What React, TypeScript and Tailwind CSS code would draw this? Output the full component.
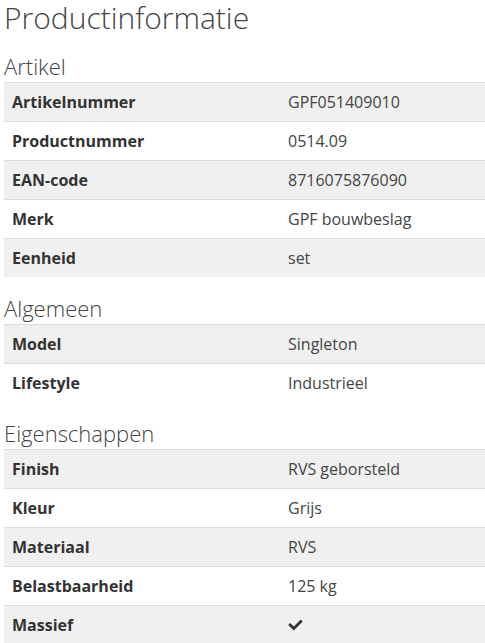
import React from "react";

type Row = { label: string; value?: string; check?: boolean };

const sections: { title: string; rows: Row[] }[] = [
  {
    title: "Artikel",
    rows: [
      { label: "Artikelnummer", value: "GPF051409010" },
      { label: "Productnummer", value: "0514.09" },
      { label: "EAN-code", value: "8716075876090" },
      { label: "Merk", value: "GPF bouwbeslag" },
      { label: "Eenheid", value: "set" },
    ],
  },
  {
    title: "Algemeen",
    rows: [
      { label: "Model", value: "Singleton" },
      { label: "Lifestyle", value: "Industrieel" },
    ],
  },
  {
    title: "Eigenschappen",
    rows: [
      { label: "Finish", value: "RVS geborsteld" },
      { label: "Kleur", value: "Grijs" },
      { label: "Materiaal", value: "RVS" },
      { label: "Belastbaarheid", value: "125 kg" },
      { label: "Massief", check: true },
    ],
  },
];

function Check() {
  return (
    <svg viewBox="0 0 512 512" className="h-[14px] w-[15px] fill-[#333]">
      <path d="M173.9 439.4l-166.4-166.4c-10-10-10-26.2 0-36.2l36.2-36.2c10-10 26.2-10 36.2 0L192 312.7 432.1 72.6c10-10 26.2-10 36.2 0l36.2 36.2c10 10 10 26.2 0 36.2l-294.4 294.4c-10 10-26.2 10-36.2 0z" />
    </svg>
  );
}

export default function App() {
  return (
    <div className="min-h-[643px] w-[485px] overflow-hidden bg-white pl-[4px] font-['Open_Sans',sans-serif] text-[#333]">
      <h1 className="text-[30px] font-light leading-[36px] text-[#444]">Productinformatie</h1>

      {sections.map((section, si) => (
        <section key={section.title} className={si === 0 ? "mt-[16px]" : "mt-[17px]"}>
          <h3 className="mb-[2px] text-[22px] font-light leading-[28px] text-[#444]">{section.title}</h3>
          <div>
            {section.rows.map((row, i) => (
              <div
                key={row.label}
                className={`grid h-[39px] grid-cols-[276px_1fr] items-center border-t border-[#dddddd] text-[16px] ${
                  i % 2 === 0 ? "bg-[#f0f0f0]" : "bg-white"
                }`}
              >
                <div className="px-[8px] font-bold text-[#333]">{row.label}</div>
                <div className="px-[8px] text-[#444]">
                  {row.check ? <Check /> : row.value}
                </div>
              </div>
            ))}
          </div>
        </section>
      ))}
    </div>
  );
}
